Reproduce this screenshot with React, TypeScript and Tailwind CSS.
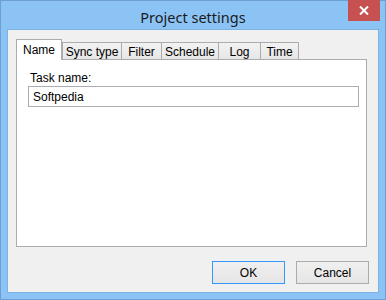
import React from 'react';

const tabs = [
  { label: 'Name', w: 'w-[46px]' },
  { label: 'Sync type', w: 'w-[59px]' },
  { label: 'Filter', w: 'w-[40px]' },
  { label: 'Schedule', w: 'w-[57px]' },
  { label: 'Log', w: 'w-[42px]' },
  { label: 'Time', w: 'w-[39px]' },
];

export default function App() {
  return (
    <div className="w-[386px] h-[300px] border border-[#6f9fd2] bg-[#8bc3f5] flex flex-col font-['Liberation_Sans',Arial,sans-serif] text-[12px] text-black select-none">
      {/* title bar */}
      <div className="relative h-[28px] shrink-0 flex items-center justify-center">
        <span className="font-['Noto_Sans',sans-serif] text-[14.5px] text-[#1b1b1b] mt-[6px]">Project settings</span>
        <div className="absolute right-[5px] -top-px w-[32px] h-[21px] bg-[#c75050] flex items-center justify-center">
          <svg width="10" height="9" viewBox="0 0 10 9">
            <path d="M1 0.5 L9 8.5 M9 0.5 L1 8.5" stroke="#fff" strokeWidth="2" />
          </svg>
        </div>
      </div>

      {/* client */}
      <div className="flex-1 mx-[6px] mb-[6px] border border-[#7eb2e3] bg-[#f0f0f0] flex flex-col pt-[9px]">
        <div className="flex items-end h-[21px] ml-[8px]">
          {tabs.map((t, i) =>
            i === 0 ? (
              <div
                key={t.label}
                className={`relative z-10 ${t.w} h-[21px] bg-white border border-b-0 border-[#acacac] flex justify-center pt-[3px] leading-[14px]`}
              >
                {t.label}
              </div>
            ) : (
              <div
                key={t.label}
                className={`${t.w} h-[18px] bg-gradient-to-b from-[#f2f2f2] to-[#e6e6e6] border-t border-l last:border-r border-[#acacac] flex justify-center pt-[2px] leading-[14px]`}
              >
                {t.label}
              </div>
            )
          )}
        </div>
        <div className="-mt-px ml-[8px] w-[351px] h-[188px] bg-white border border-[#acacac] flex flex-col pl-[11px] pt-[11px]">
          <div className="leading-[14px] pl-[2px]">Task name:</div>
          <div className="mt-px w-[331px] h-[21px] border border-[#abadb3] flex items-center pl-[4px]">
            Softpedia
          </div>
        </div>
        <div className="flex justify-end gap-[11px] mt-[14px] pr-[9px]">
          <button className="w-[73px] h-[23px] border border-[#3399ff] bg-gradient-to-b from-[#f0f0f0] to-[#e5e5e5] flex items-center justify-center">
            OK
          </button>
          <button className="w-[73px] h-[23px] border border-[#acacac] bg-gradient-to-b from-[#f0f0f0] to-[#e5e5e5] flex items-center justify-center">
            Cancel
          </button>
        </div>
      </div>
    </div>
  );
}
